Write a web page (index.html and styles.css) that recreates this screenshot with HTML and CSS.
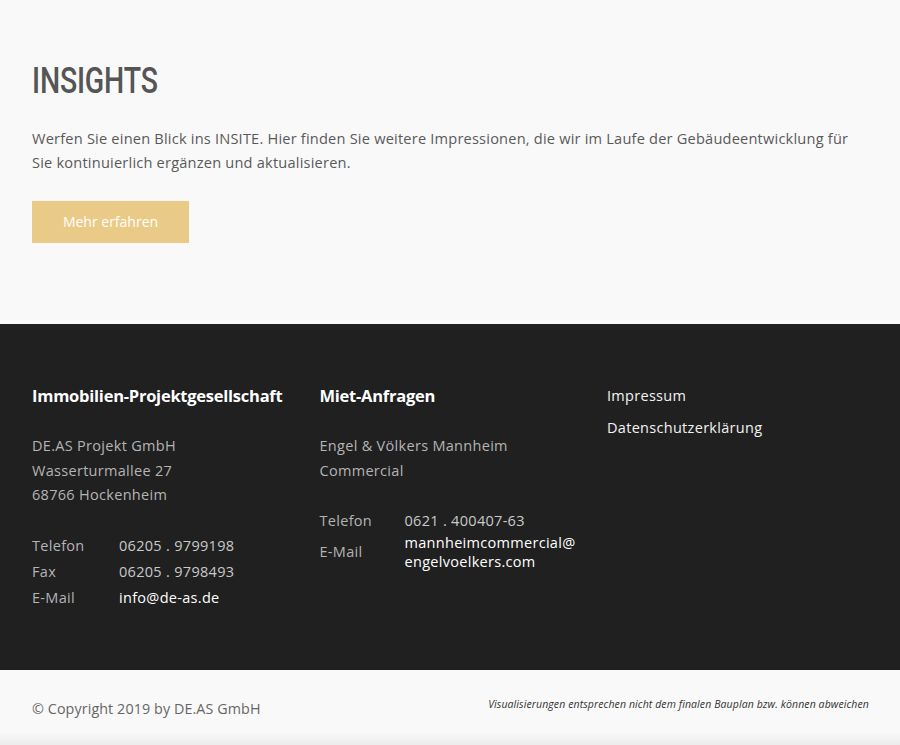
FILE: index.html
```html
<!DOCTYPE html>
<html lang="de">
<head>
<meta charset="utf-8">
<title>Insights</title>
<link rel="stylesheet" href="styles.css">
</head>
<body>
<section class="insights">
  <h1 class="insights-title">INSIGHTS</h1>
  <p class="insights-text">Werfen Sie einen Blick ins INSITE. Hier finden Sie weitere Impressionen, die wir im Laufe der Gebäudeentwicklung für Sie kontinuierlich ergänzen und aktualisieren.</p>
  <a class="btn" href="#">Mehr erfahren</a>
</section>

<footer class="site-footer">
  <div class="footer-col">
    <h3 class="footer-head">Immobilien-Projektgesellschaft</h3>
    <p class="footer-address">DE.AS Projekt GmbH<br>Wasserturmallee 27<br>68766 Hockenheim</p>
    <dl class="contact">
      <dt>Telefon</dt><dd>06205 . 9799198</dd>
      <dt>Fax</dt><dd>06205 . 9798493</dd>
      <dt>E-Mail</dt><dd class="link">info@de-as.de</dd>
    </dl>
  </div>
  <div class="footer-col">
    <h3 class="footer-head">Miet-Anfragen</h3>
    <p class="footer-address">Engel &amp; Völkers Mannheim<br>Commercial</p>
    <dl class="contact contact-alt">
      <dt>Telefon</dt><dd>0621 . 400407-63</dd>
      <dt class="mid">E-Mail</dt><dd class="link tight">mannheimcommercial@<br>engelvoelkers.com</dd>
    </dl>
  </div>
  <nav class="footer-col footer-links">
    <a href="#">Impressum</a>
    <a href="#">Datenschutzerklärung</a>
  </nav>
</footer>

<div class="bottom-bar">
  <span class="copyright">© Copyright 2019 by DE.AS GmbH</span>
  <span class="disclaimer">Visualisierungen entsprechen nicht dem finalen Bauplan bzw. können abweichen</span>
</div>
</body>
</html>
```

FILE: styles.css
```css
* { box-sizing: border-box; }

html, body {
  margin: 0;
  padding: 0;
  background: #f9f9f9;
  font-family: "Open Sans", "Noto Sans", sans-serif;
  color: #555;
}

.insights {
  padding: 61px 32px 81px;
}

.insights-title {
  margin: 0;
  font-family: Roboto, "Liberation Sans", sans-serif;
  font-weight: 500;
  font-size: 36px;
  line-height: 40px;
  color: #555;
  display: inline-block;
  transform: scaleX(0.79);
  transform-origin: left center;
  letter-spacing: -0.2px;
}

.insights-text {
  margin: 25px 0 27px;
  font-size: 14.6px;
  line-height: 24px;
  letter-spacing: 0.2px;
  color: #5a5a5a;
}

.btn {
  display: inline-block;
  width: 157px;
  height: 42px;
  line-height: 42px;
  text-align: center;
  background: #e9ca86;
  color: #fff;
  font-size: 14px;
  text-decoration: none;
}

.site-footer {
  background: #202020;
  padding: 60px 32px 52px;
  display: grid;
  grid-template-columns: repeat(3, 257.5px);
  column-gap: 30px;
  height: 346px;
}

.footer-head {
  margin: 0 0 26px;
  color: #fff;
  font-weight: 700;
  font-size: 16.5px;
  line-height: 24px;
  letter-spacing: -0.25px;
  white-space: nowrap;
}

.footer-address {
  margin: 0 0 26px;
  color: #b4b4b4;
  font-size: 14.5px;
  line-height: 24.5px;
  letter-spacing: 0.3px;
}

.contact {
  margin: 0;
  display: grid;
  grid-template-columns: 87px 1fr;
  row-gap: 2px;
  font-size: 14.5px;
  line-height: 24px;
  letter-spacing: 0.3px;
}

.contact dt {
  color: #b4b4b4;
  align-self: center;
}

.contact dd {
  margin: 0;
  color: #c9c9c9;
}

.contact dd.link {
  color: #fff;
}

.contact-alt {
  grid-template-columns: 85px 1fr;
  row-gap: 0;
}

.contact dd.tight {
  line-height: 19px;
  white-space: nowrap;
}

.footer-links {
  display: flex;
  flex-direction: column;
  gap: 8px;
}

.footer-links a {
  color: #f2f2f2;
  text-decoration: none;
  font-size: 14.5px;
  line-height: 24px;
  letter-spacing: 0.3px;
}

.bottom-bar {
  height: 75px;
  padding: 0 31px 0 32px;
  display: flex;
  justify-content: space-between;
  align-items: center;
  background: linear-gradient(to bottom, #f9f9f9 0, #f9f9f9 62px, #ececec 75px);
}

.copyright {
  font-size: 14.3px;
  color: #666;
  letter-spacing: 0.1px;
  margin-top: 1px;
}

.disclaimer {
  font-size: 10.5px;
  font-style: italic;
  color: #333;
  margin-top: -7px;
  letter-spacing: 0.1px;
}
```
